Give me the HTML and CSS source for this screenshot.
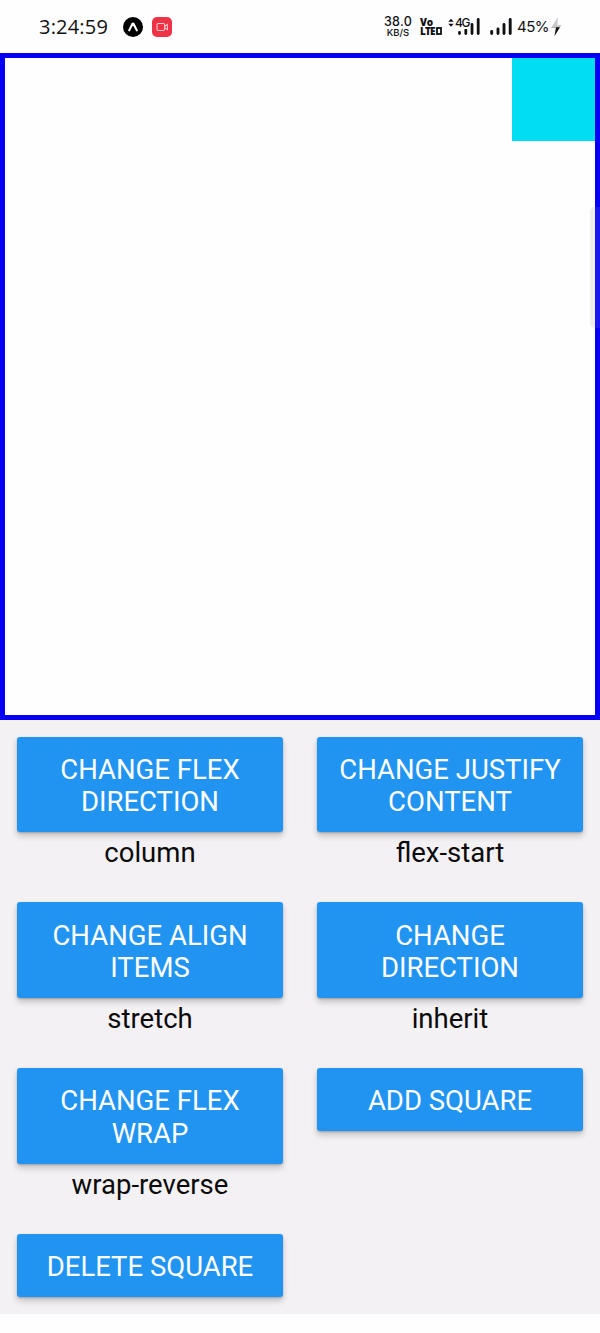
FILE: index.html
```html
<!DOCTYPE html>
<html lang="en">
<head>
<meta charset="utf-8">
<title>Flex layout</title>
<link rel="stylesheet" href="styles.css">
</head>
<body>
<header class="status">
  <span class="clock">3:24:59</span>
  <svg class="app-icon" width="20" height="20" viewBox="0 0 20 20"><circle cx="10" cy="10" r="10"/><path d="M6.2 13.4 9.2 7.2Q10 6 10.8 7.2L13.8 13.4" fill="none" stroke="#fff" stroke-width="2.1" stroke-linecap="round"/></svg>
  <svg class="rec-icon" width="20" height="20" viewBox="0 0 20 20"><rect width="20" height="20" rx="5" fill="#ee3347"/><g fill="none" stroke="#ffc5cb" stroke-width="1.1"><rect x="5" y="6.5" width="7.6" height="7" rx="1.2"/><path d="M12.6 9.3 15.4 7.5V12.5L12.6 10.8"/></g></svg>
  <span class="speed"><b>38.0</b><span>KB/S</span></span>
  <span class="volte"><b>Vo</b><b class="lte">LTE<svg width="6" height="8" viewBox="0 0 6 8"><rect x="1" y="1" width="4" height="6" fill="none" stroke="#111" stroke-width="1.8"/></svg></b></span>
  <span class="network">
    <svg width="33" height="20" viewBox="0 0 33 20" fill="#111"><path d="M.3 4.8 3 1.8 5.7 4.8ZM.3 6.8H5.7L3 9.8Z"/><g stroke="#111" stroke-width="2.8" stroke-linecap="round"><path d="M11.5 15.5V16.5M17.8 13V16.5M24 7.5V16.5M30.2 2.5V16.5"/></g></svg>
    <span class="gen">4G</span>
  </span>
  <svg class="signal" width="23" height="20" viewBox="0 0 23 20"><path d="M1.7 14.5V16.5M8 12V16.5M14 7.5V16.5M20.2 2.5V16.5" stroke="#111" stroke-width="2.9" stroke-linecap="round"/></svg>
  <span class="battery">45%</span>
  <svg class="bolt" width="11" height="20" viewBox="0 0 11 20"><path d="M7 0 .3 10.5H5L3.5 19 10.5 8H6.2Z" fill="#c8c8c8"/><path d="M.3 10.5H5L3.5 19 9 10.2H.5Z" fill="#111"/></svg>
</header>
<main class="canvas"><div class="square"></div><div class="edge-handle"></div></main>
<section class="controls">
  <div class="control"><button class="button">CHANGE FLEX<br>DIRECTION</button><span class="value">column</span></div>
  <div class="control"><button class="button">CHANGE JUSTIFY<br>CONTENT</button><span class="value">flex-start</span></div>
  <div class="control"><button class="button">CHANGE ALIGN<br>ITEMS</button><span class="value">stretch</span></div>
  <div class="control"><button class="button">CHANGE<br>DIRECTION</button><span class="value">inherit</span></div>
  <div class="control"><button class="button">CHANGE FLEX<br>WRAP</button><span class="value">wrap-reverse</span></div>
  <div class="control"><button class="button">ADD SQUARE</button></div>
  <div class="control"><button class="button">DELETE SQUARE</button></div>
</section>
</body>
</html>
```
FILE: styles.css
```css
* { box-sizing: border-box; }
body {
  margin: 0;
  height: 1333px;
  overflow: hidden;
  background: #fefdff;
  color: #0b0b0b;
  font-family: Roboto, "Liberation Sans", sans-serif;
}
svg { display: block; flex: none; }
.status {
  display: flex;
  align-items: center;
  height: 53px;
  padding-left: 39px;
  color: #111;
}
.clock {
  width: 83.5px;
  font: 20px/24px "Open Sans", "Noto Sans", sans-serif;
  letter-spacing: .2px;
  white-space: nowrap;
}
.rec-icon { margin-left: 9.5px; }
.speed {
  display: flex;
  flex-direction: column;
  align-items: center;
  width: 28px;
  margin-left: 212px;
  font: 9.5px/9px Inter, sans-serif;
}
.speed b { font-size: 12.5px; line-height: 12px; font-weight: 500; letter-spacing: .3px; }
.speed span { font-weight: 500; }
.volte {
  width: 20px;
  margin-left: 8px;
  font: 10px/9px "Open Sans", sans-serif;
}
.volte b { display: flex; font-weight: 800; letter-spacing: -.2px; }
.volte .lte { align-items: center; letter-spacing: -.9px; }
.lte svg { margin-left: 1px; }
.network { position: relative; margin-left: 8px; }
.gen {
  position: absolute;
  left: 7px;
  top: 0;
  font: 500 12px/12px Inter, sans-serif;
  letter-spacing: -1.3px;
  background: #fefdff;
}
.signal { margin-left: 9px; }
.battery {
  width: 34px;
  margin-left: 4px;
  font: 15px/20px Inter, sans-serif;
  letter-spacing: -.5px;
}
.bolt { width: 11px; }
.canvas {
  position: relative;
  display: flex;
  justify-content: flex-end;
  align-items: flex-start;
  height: 666.5px;
  border: 5px solid #0500f5;
  background: #fefdff;
}
.square { width: 83px; height: 83px; background: #00def3; }
.edge-handle {
  position: absolute;
  right: -5px;
  top: 149px;
  width: 10px;
  height: 121px;
  border-radius: 5px 0 0 5px;
  background: linear-gradient(90deg, #ededeb 0 5px, #1a16f0 5px);
}
.controls {
  display: grid;
  grid-template-columns: 266.6px 266.6px;
  grid-auto-rows: 132.8px;
  gap: 33px 33.4px;
  height: 594.5px;
  padding: 17px 16.7px;
  background: #f3f1f4;
}
.control { display: flex; flex-direction: column; }
.button {
  padding: 17.4px 0 13.3px;
  border: 0;
  border-radius: 3px;
  background: #2194f2;
  box-shadow: 0 4px 6px rgba(0, 0, 0, .2), 0 1px 2px rgba(0, 0, 0, .2);
  color: #fff;
  font: 27.5px/32.5px Roboto, "Liberation Sans", sans-serif;
  white-space: nowrap;
}
.value {
  margin-top: 3.8px;
  font-size: 27.5px;
  line-height: 34px;
  text-align: center;
}
```
